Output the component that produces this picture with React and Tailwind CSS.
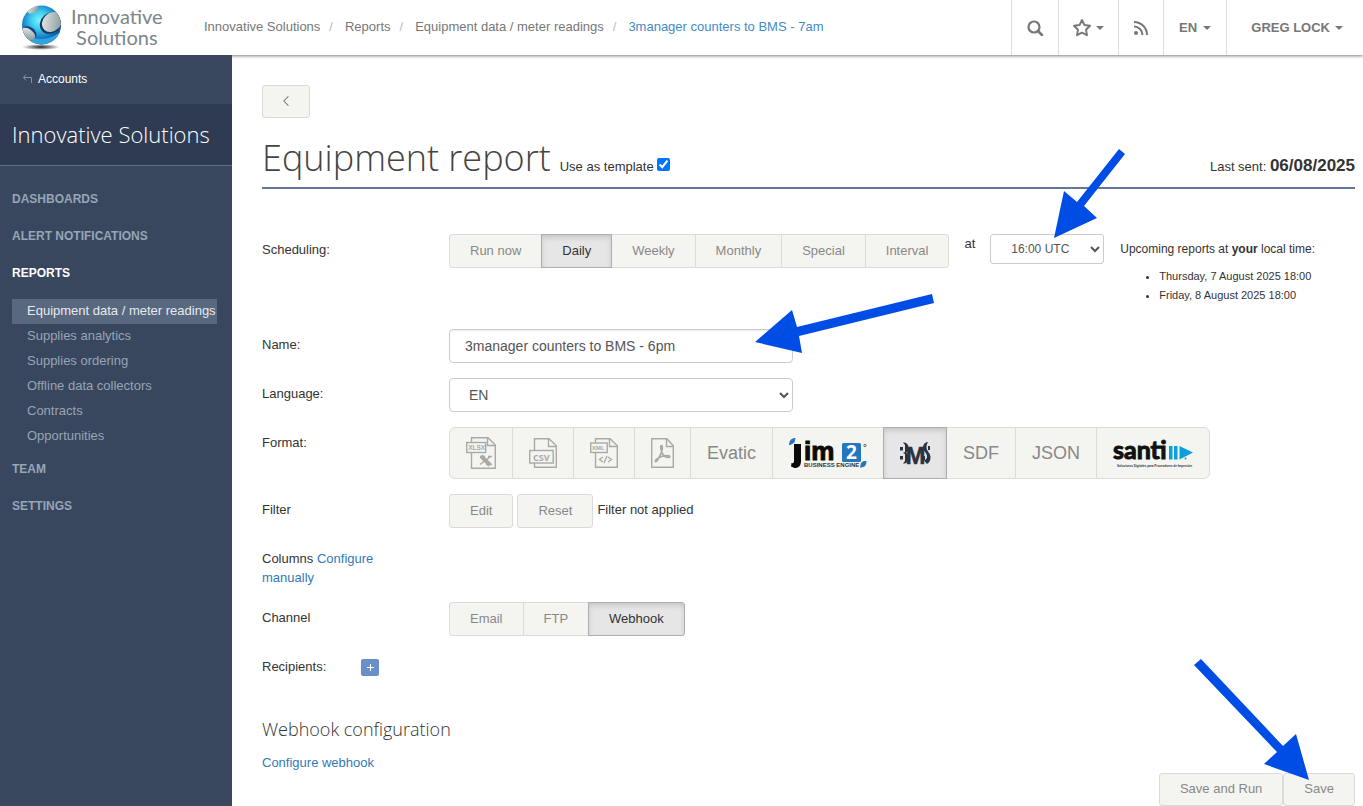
import React, { useState } from 'react';
import clsx from 'clsx';

const breadcrumbs = ['Innovative Solutions', 'Reports', 'Equipment data / meter readings'];

const reportLinks = [
    'Equipment data / meter readings',
    'Supplies analytics',
    'Supplies ordering',
    'Offline data collectors',
    'Contracts',
    'Opportunities',
];

const schedules = ['Run now', 'Daily', 'Weekly', 'Monthly', 'Special', 'Interval'];
const channels = ['Email', 'FTP', 'Webhook'];

const Caret = () => (
    <svg width="8" height="4" viewBox="0 0 8 4" fill="currentColor" aria-hidden="true">
        <path d="M0 0h8L4 4z" />
    </svg>
);

const GlobeLogo = () => (
    <svg width="42" height="46" viewBox="0 0 42 46" className="mt-px" aria-hidden="true">
        <defs>
            <radialGradient id="ball" cx="45%" cy="38%" r="62%">
                <stop offset="0" stopColor="#7df4fb" />
                <stop offset="0.35" stopColor="#3fcdf0" />
                <stop offset="0.75" stopColor="#1277c4" />
                <stop offset="1" stopColor="#0a3c86" />
            </radialGradient>
            <linearGradient id="silver" x1="0" y1="0" x2="1" y2="1">
                <stop offset="0" stopColor="#eef1f1" />
                <stop offset="1" stopColor="#7f8c90" />
            </linearGradient>
            <radialGradient id="shade">
                <stop offset="0" stopColor="#222" />
                <stop offset="1" stopColor="#222" stopOpacity="0" />
            </radialGradient>
            <clipPath id="ballClip">
                <circle cx="20.500" cy="20" r="19.500" />
            </clipPath>
        </defs>
        <ellipse cx="20" cy="42" rx="19" ry="3" fill="url(#shade)" />
        <circle cx="20.500" cy="20" r="19.500" fill="url(#ball)" />
        <g clipPath="url(#ballClip)">
            <path d="M9 31c8 5 20 4 30-4l-4 14H10z" fill="#2ba4df" />
            <ellipse cx="12" cy="4" rx="6" ry="4" transform="rotate(-35 12 4)" fill="url(#silver)" />
            <ellipse cx="30" cy="18" rx="12" ry="10" transform="rotate(-40 30 18)" fill="#123a5c" />
            <ellipse cx="31" cy="17" rx="11" ry="9" transform="rotate(-45 31 17)" fill="url(#silver)" />
            <ellipse cx="8" cy="28" rx="8" ry="6" transform="rotate(35 8 28)" fill="#14456e" />
            <ellipse cx="7" cy="29" rx="8" ry="5" transform="rotate(35 7 29)" fill="url(#silver)" />
        </g>
    </svg>
);

const XlsxIcon = () => (
    <svg width="30" height="32" viewBox="0 0 30 32" fill="none" stroke="#a9aaa5" aria-hidden="true">
        <path d="M5.500 5V.700H22l7.300 7.300V31.300H5.500V16" strokeWidth="1.400" />
        <path d="M21.500 1v7.500H29" strokeWidth="1.400" />
        <rect x=".700" y="5.500" width="19" height="10" strokeWidth="1.400" />
        <text x="2.200" y="13" fontSize="6.500" fontWeight="bold" fill="#a9aaa5" stroke="none" fontFamily="Liberation Sans, sans-serif">XLSX</text>
        <path d="M15 19l9 9" strokeWidth="4" />
        <path d="M24.500 19.500L14 27.500M14 19.500h5M20 27.500h6M22 19.500h4" strokeWidth="1.500" />
    </svg>
);

const CsvIcon = () => (
    <svg width="28" height="30" viewBox="0 0 28 30" fill="none" stroke="#a9aaa5" strokeWidth="1.400" aria-hidden="true">
        <path d="M5.500 12V.700H20l7.300 7V29.300H5.500V25" />
        <path d="M19.500 1v7.500H27" />
        <rect x=".700" y="12.500" width="23.500" height="12.500" fill="#f4f5f0" />
        <text x="4" y="22.500" fontSize="9" fontWeight="bold" fill="#a9aaa5" stroke="none" fontFamily="Open Sans, sans-serif">CSV</text>
    </svg>
);

const XmlIcon = () => (
    <svg width="28" height="30" viewBox="0 0 28 30" fill="none" stroke="#a9aaa5" strokeWidth="1.400" aria-hidden="true">
        <path d="M5.500 5V.700H20l7.300 7V29.300H5.500V15" />
        <path d="M19.500 1v7.500H27" />
        <rect x=".700" y="5" width="16.500" height="9.500" />
        <text x="2" y="12.300" fontSize="6" fontWeight="bold" fill="#a9aaa5" stroke="none" fontFamily="Liberation Sans, sans-serif">XML</text>
        <path d="M13 19l-3.500 2.500L13 24M18 19l3.500 2.500L18 24M17 18l-3 7" strokeWidth="1.300" />
    </svg>
);

const PdfIcon = () => (
    <svg width="23" height="30" viewBox="0 0 23 30" fill="none" stroke="#a9aaa5" strokeWidth="1.400" aria-hidden="true">
        <path d="M.700.700H16l6.300 7V29.300H.700z" />
        <path d="M15.500 1v7.500H22" />
        <path d="M10.500 7.500c-1.500 0-.600 4 .500 7 1.500 3.500 4.500 5 6.500 5 2 0 1.500-1.800-1-1.800-4 0-8.500 1.500-11 3.600-2.500 2.300-.600 3.200 1 .700 1.800-2.800 4.500-7.500 4.800-11.500.100-2-.200-3-.800-3z" strokeWidth="1.700" />
    </svg>
);

const JimLogo = () => (
    <svg width="78" height="32" viewBox="0 0 78 32" className="overflow-visible" aria-hidden="true">
        <path d="M0 8c0-4.500 2.500-7 6.500-7l-1 4.500L1.500 8z" fill="#2676bd" />
        <path d="M5 7h7v17c0 4.500-2 7-6.500 7L2 29.500 2.500 26c2 .500 2.500-.500 2.500-2z" fill="#0a0a0a" />
        <text x="15" y="23" fontSize="26" fontWeight="bold" stroke="#0a0a0a" strokeWidth="1" fill="#0a0a0a" fontFamily="Liberation Sans, sans-serif">im</text>
        <rect x="53" y="6" width="19" height="19" rx="1.500" fill="#2676bd" />
        <text x="57" y="22" fontSize="19" fontWeight="bold" fill="#fff" fontFamily="Open Sans, sans-serif">2</text>
        <text x="15" y="30" fontSize="6" fontWeight="bold" fill="#333" fontFamily="Liberation Sans, sans-serif">BUSINESS ENGINE</text>
        <circle cx="76" cy="8.500" r="1.200" fill="none" stroke="#333" strokeWidth=".700" />
        <path d="M77.500 24c0 4.500-2 6.500-6.500 6.500L72 26l2.500-2z" fill="#2676bd" />
    </svg>
);

const BmsLogo = () => (
    <svg width="30" height="24" viewBox="0 0 30 24" className="overflow-visible" fill="#2c333d" aria-hidden="true">
        <path d="M0 6h3v3.500H0zM0 15h3v3.500H0zM3 1.500c3.500 0 5.500 2 5.500 5 0 2.500-.800 4-2.500 5.200 2 1 3 3 3 5.300 0 3.500-2.500 5.500-6 5.500l2-2.500V13L3 12l2-1V4z" />
        <text x="15.500" y="23" textAnchor="middle" fontSize="33" fontWeight="bold" stroke="#2c333d" strokeWidth=".500" fontFamily="Liberation Sans Narrow, Liberation Sans, sans-serif" className="text-[24px]">M</text>
        <path d="M27 1c-3 1-4 3-4 5.500 0 4 4 5 4 9 0 2-1.500 3.500-3 4l3 3.500c2-1 3.500-3.500 3.500-6.500 0-4.500-4-6.500-4-10 0-2 .500-4 1.500-5.500zM28 5h2v4h-2zM23 15h2v4h-2z" />
    </svg>
);

const SantiLogo = () => (
    <svg width="80" height="32" viewBox="0 0 80 32" className="overflow-visible" aria-hidden="true">
        <text x="0" y="22" fontSize="25" fontWeight="bold" stroke="#111" strokeWidth="1" fill="#111" fontFamily="Liberation Sans Narrow, Lato, sans-serif">santi</text>
        <path d="M56 9h3.500v13.500H56zM61 9h3.500v13.500H61z" fill="#0aa0dc" />
        <path d="M66.500 9L80 15.500l-13.500 7z" fill="#0aa0dc" />
        <circle cx="72.500" cy="21.500" r="1" fill="#0aa0dc" />
        <text x="4" y="30" fontSize="3" fill="#333" fontWeight="bold" fontFamily="Liberation Sans, sans-serif">Soluciones Digitales para Proveedores de Impresión</text>
    </svg>
);

const formats = [
    { name: 'XLSX', content: <XlsxIcon /> },
    { name: 'CSV', content: <CsvIcon /> },
    { name: 'XML', content: <XmlIcon /> },
    { name: 'PDF', content: <PdfIcon /> },
    { name: 'Evatic', content: 'Evatic' },
    { name: 'Jim2', content: <JimLogo /> },
    { name: 'BMS', content: <BmsLogo /> },
    { name: 'SDF', content: 'SDF' },
    { name: 'JSON', content: 'JSON' },
    { name: 'Santi', content: <SantiLogo /> },
];

const Header = () => (
    <header className="flex h-[55px] shrink-0 bg-white text-[#777] shadow-[0_1px_3px_rgba(0,0,0,0.5)]">
        <a href="#home" className="flex w-[204px] shrink-0 gap-2 pl-[21px] pt-1">
            <GlobeLogo />
            <span className="text-center font-['Lato',sans-serif] text-[20px] leading-[21px] text-[#7b868b] pt-0.5">
                Innovative<br />Solutions
            </span>
        </a>
        <nav className="flex flex-1 items-center pb-[2px]" aria-label="Breadcrumb">
            {breadcrumbs.map((item) => (
                <React.Fragment key={item}>
                    <a href="#crumb">{item}</a>
                    <span className="pr-[12px] pl-[9px] text-[#bbb]">/</span>
                </React.Fragment>
            ))}
            <a href="#current" className="text-[#428bca]">3manager counters to BMS - 7am</a>
        </nav>
        <div className="flex font-bold">
            <button className="flex w-[47px] items-center justify-center border-l border-[#ddd]" aria-label="Search">
                <svg width="17" height="17" viewBox="0 0 17 17" fill="none" stroke="currentColor" strokeWidth="2.200">
                    <circle cx="7" cy="8" r="5.500" />
                    <path d="M11 12l4 4" strokeLinecap="round" strokeWidth="2.500" />
                </svg>
            </button>
            <button className="flex w-[60px] items-center justify-center gap-1 border-l border-[#ddd]" aria-label="Favourites">
                <svg width="19" height="18" viewBox="0 0 19 18" fill="none" stroke="currentColor" strokeWidth="1.900" strokeLinejoin="round">
                    <path d="M9 1l2.400 5 5.600.800-4 3.900 1 5.500-5-2.600-5 2.600 1-5.500-4-3.900 5.600-.800z" />
                </svg>
                <Caret />
            </button>
            <button className="flex w-[45px] items-center justify-center border-l border-[#ddd]" aria-label="Feed">
                <svg width="14" height="14" viewBox="0 0 14 14" fill="none" stroke="currentColor" strokeWidth="2">
                    <circle cx="2" cy="12" r="2" fill="currentColor" stroke="none" />
                    <path d="M0 5.500A8.500 8.500 0 0 1 8.500 14M0 1a13 13 0 0 1 13 13" />
                </svg>
            </button>
            <button className="flex w-[63px] items-center justify-center gap-1.5 border-l border-[#ddd]">EN <Caret /></button>
            <button className="flex w-[137px] items-center justify-end gap-[5px] border-l border-[#ddd] pr-5">GREG LOCK <Caret /></button>
        </div>
    </header>
);

const NavHeading = ({ children, active }) => (
    <a href="#section" className={clsx('block px-3 py-[9px] text-xs leading-[19px] font-bold', active ? 'text-white' : 'text-[#97a5b7]')}>
        {children}
    </a>
);

const Sidebar = () => (
    <aside className="relative w-[232px] shrink-0 bg-[#38475e]">
        <a href="#accounts" className="flex h-[49px] items-center gap-1.5 pb-[2px] pl-[23px] text-xs text-white">
            <svg width="9" height="9" viewBox="0 0 9 9" fill="none" stroke="#8593a6">
                <path d="M3 .500L.500 3.500 3 6.500M.500 3.500h8V9" />
            </svg>
            Accounts
        </a>
        <h2 className="border-b border-[#5f7087] bg-[#2e3b52] px-3 py-[15px] font-['Open_Sans',sans-serif] text-[22px] leading-[31px] font-light text-white">
            Innovative Solutions
        </h2>
        <nav className="pt-[15px]" aria-label="Main">
            <NavHeading>DASHBOARDS</NavHeading>
            <NavHeading>ALERT NOTIFICATIONS</NavHeading>
            <NavHeading active>REPORTS</NavHeading>
            <ul className="mx-3 mt-[7px] mb-[2px]">
                {reportLinks.map((link, i) => (
                    <li key={link}>
                        <a
                            href="#report"
                            className={clsx('mr-[3px] block pt-[2px] pb-1 pl-[15px] leading-[19px] whitespace-nowrap', i === 0 ? 'bg-[#58687f] text-[#e6eaef]' : 'text-[#97a5b7]')}
                        >
                            {link}
                        </a>
                    </li>
                ))}
            </ul>
            <NavHeading>TEAM</NavHeading>
            <NavHeading>SETTINGS</NavHeading>
        </nav>
    </aside>
);

const Button = ({ children, className, ...rest }) => (
    <button
        type="button"
        className={clsx('rounded-[3px] border border-[#dbdcd7] bg-[#f4f5f0] px-5 pb-[2px] text-[#888]', className)}
        {...rest}
    >
        {children}
    </button>
);

const ButtonGroup = ({ label, options, value, onChange, large }) => (
    <div className="flex" role="group" aria-label={label}>
        {options.map(({ name, content }) => (
            <button
                key={name}
                type="button"
                aria-label={name}
                aria-pressed={value === name}
                onClick={() => onChange(name)}
                className={clsx(
                    '-ml-px flex items-center border first:ml-0',
                    large
                        ? 'h-[52px] px-4 text-lg first:rounded-l-[6px] last:rounded-r-[6px]'
                        : 'h-[34px] px-5 pb-[2px] first:rounded-l-[3px] last:rounded-r-[3px]',
                    value === name
                        ? 'z-10 border-[#adadad] bg-[#e6e6e6] text-[#333] shadow-[inset_0_3px_5px_rgba(0,0,0,0.125)]'
                        : 'border-[#dbdcd7] bg-[#f4f5f0] text-[#888]'
                )}
            >
                {content}
            </button>
        ))}
    </div>
);

const Row = ({ label, htmlFor, children, className }) => (
    <div className={clsx('mb-[15px] flex', className)}>
        <label htmlFor={htmlFor} className="w-[187px] shrink-0 pt-[6px] pr-[30px]">{label}</label>
        {children}
    </div>
);

// blue pointer drawn on top of the form
const Arrow = ({ width, height, points, className }) => (
    <svg
        width={width}
        height={height}
        viewBox={`0 0 ${width} ${height}`}
        className={clsx('pointer-events-none absolute z-20 max-w-none', className)}
        aria-hidden="true"
    >
        <polygon points={points} fill="#004de6" />
    </svg>
);

const asOptions = (names) => names.map((name) => ({ name, content: name }));

const App = () => {
    const [schedule, setSchedule] = useState('Daily');
    const [format, setFormat] = useState('BMS');
    const [channel, setChannel] = useState('Webhook');
    const [name, setName] = useState('3manager counters to BMS - 6pm');
    const [isTemplate, setIsTemplate] = useState(true);

    return (
        <div className="flex min-h-screen flex-col bg-white font-['Liberation_Sans',Arial,sans-serif] text-[13px] leading-[19px] text-[#333]">
            <Header />
            <div className="flex flex-1">
                <Sidebar />
                <main className="flex min-w-0 flex-1 flex-col pt-[30px] pr-2 pl-[30px]">
                    <Button className="flex h-[33px] w-12 items-center justify-center" aria-label="Back">
                        <svg width="7" height="12" viewBox="0 0 7 12" fill="none" stroke="#777" strokeWidth="1.200">
                            <path d="M6.300.500L1 6l5.300 5.500" />
                        </svg>
                    </Button>
                    <div className="mt-5 mb-[45px] flex items-baseline border-b-2 border-[#64779a] pb-[9px]">
                        <h1 className="mr-[9px] font-['Open_Sans',sans-serif] text-4xl leading-10 font-light text-[#444]">Equipment report</h1>
                        <label htmlFor="template">Use as template</label>
                        <input
                            id="template"
                            type="checkbox"
                            className="ml-[3px] h-[13px] w-[13px] accent-[#0075ff]"
                            checked={isTemplate}
                            onChange={(e) => setIsTemplate(e.target.checked)}
                        />
                        <div className="ml-auto">Last sent: <b className="text-[17px]">06/08/2025</b></div>
                    </div>

                    <Row label="Scheduling:" className="min-h-20">
                        <ButtonGroup label="Scheduling" options={asOptions(schedules)} value={schedule} onChange={setSchedule} />
                        <label htmlFor="time" className="ml-[15px]">at</label>
                        <div className="relative ml-[15px]">
                            <select id="time" className="h-[30px] w-[114px] rounded-[3px] border border-[#ccc] bg-white px-4 text-xs text-[#555]">
                                <option>16:00 UTC</option>
                            </select>
                            <Arrow
                                width={78}
                                height={94}
                                points="69,3 75,8 34,60 47,72 4,92 14,45 27,56"
                                className="-top-[88px] left-[60px]"
                            />
                        </div>
                        <div className="ml-4 pt-[6px]">
                            <p className="text-xs leading-[19px] whitespace-nowrap">Upcoming reports at <b>your</b> local time:</p>
                            <ul className="mt-2 list-disc pl-[39px] text-[11px]">
                                <li>Thursday, 7 August 2025 18:00</li>
                                <li>Friday, 8 August 2025 18:00</li>
                            </ul>
                        </div>
                    </Row>
                    <Row label="Name:" htmlFor="name">
                        <div className="relative w-[344px]">
                            <input
                                id="name"
                                type="text"
                                className="h-[34px] w-full rounded-[4px] border border-[#ccc] px-[15px] text-sm text-[#555] shadow-[inset_0_1px_1px_rgba(0,0,0,0.075)]"
                                value={name}
                                onChange={(e) => setName(e.target.value)}
                            />
                            <Arrow
                                width={186}
                                height={66}
                                points="180,3 182,12 47,45 50,62 3,51 40,19 45,36"
                                className="-top-[38px] left-[303px]"
                            />
                        </div>
                    </Row>
                    <Row label="Language:" htmlFor="language">
                        <select id="language" className="h-[34px] w-[344px] rounded-[4px] border border-[#ccc] bg-white px-[15px] text-sm text-[#555]">
                            <option>EN</option>
                        </select>
                    </Row>
                    <Row label="Format:">
                        <ButtonGroup label="Format" options={formats} value={format} onChange={setFormat} large />
                    </Row>
                    <Row label="Filter">
                        <div className="flex gap-1">
                            <Button className="h-[34px]">Edit</Button>
                            <Button className="h-[34px]">Reset</Button>
                            <span className="pt-[6px]">Filter not applied</span>
                        </div>
                    </Row>
                    <Row label={<>Columns <a href="#columns" className="text-[#337ab7]">Configure manually</a></>} />
                    <Row label="Channel">
                        <ButtonGroup label="Channel" options={asOptions(channels)} value={channel} onChange={setChannel} />
                    </Row>
                    <div className="flex h-[34px] items-start">
                        <span className="w-[99px] pt-[6px]">Recipients:</span>
                        <button type="button" aria-label="Add recipient" className="mt-2 flex h-[17px] w-[18px] items-center justify-center rounded-[2px] bg-[#6990c8]">
                            <svg width="7" height="7" viewBox="0 0 7 7" stroke="#fff">
                                <path d="M3.500 0v7M0 3.500h7" />
                            </svg>
                        </button>
                    </div>

                    <h3 className="mt-[34px] mb-[14px] font-['Open_Sans',sans-serif] text-lg leading-5 font-light">Webhook configuration</h3>
                    <a href="#webhook" className="self-start text-[#337ab7]">Configure webhook</a>

                    <div className="mt-auto flex justify-end">
                        <Button className="h-[33px]">Save and Run</Button>
                        <div className="relative">
                            <Button className="h-[33px]">Save</Button>
                            <Arrow
                                width={122}
                                height={128}
                                points="11,3 93,90 106,78 119,124 74,108 87,96 4,9"
                                className="-top-[117px] right-[43px]"
                            />
                        </div>
                    </div>
                </main>
            </div>
        </div>
    );
};

export default App;
